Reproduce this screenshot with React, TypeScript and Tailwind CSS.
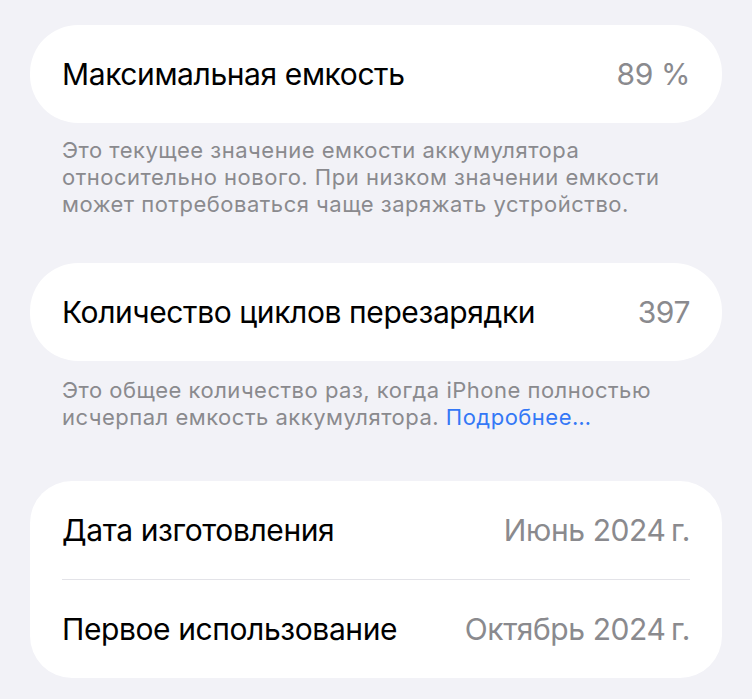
import React from 'react';

const font = { fontFamily: 'Inter, "Noto Sans", sans-serif' };

type RowProps = { label: string; value: string };

const Row = ({ label, value }: RowProps) => (
  <div className="flex h-[98px] items-center justify-between px-8">
    <span className="text-[30px] tracking-[-0.4px] text-black">{label}</span>
    <span className="text-[30px] tracking-[-0.4px] text-[#8a8a8e]">{value}</span>
  </div>
);

const Footnote = ({ children }: { children: React.ReactNode }) => (
  <p className="px-8 text-[22px] leading-[27px] tracking-[0.5px] text-[#8a8a8e]">{children}</p>
);

const App = () => {
  return (
    <div className="min-h-[699px] w-full bg-[#f2f2f7] px-[30px] pt-[25px]" style={font}>
      <div className="rounded-[48px] bg-white">
        <Row label="Максимальная емкость" value="89 %" />
      </div>
      <div className="mt-[14px]">
        <Footnote>
          Это текущее значение емкости аккумулятора относительно нового. При низком значении емкости
          может потребоваться чаще заряжать устройство.
        </Footnote>
      </div>

      <div className="mt-[45px] rounded-[48px] bg-white">
        <Row label="Количество циклов перезарядки" value="397" />
      </div>
      <div className="mt-[16px]">
        <Footnote>
          Это общее количество раз, когда iPhone полностью исчерпал емкость аккумулятора.{' '}
          <span className="text-[#3478f6]">Подробнее…</span>
        </Footnote>
      </div>

      <div className="mt-[50px] rounded-[42px] bg-white">
        <Row label="Дата изготовления" value={'Июнь 2024\u202Fг.'} />
        <div className="mx-8 h-px bg-[#e3e3e8]" />
        <Row label="Первое использование" value={'Октябрь 2024\u202Fг.'} />
      </div>
    </div>
  );
};

export default App;
